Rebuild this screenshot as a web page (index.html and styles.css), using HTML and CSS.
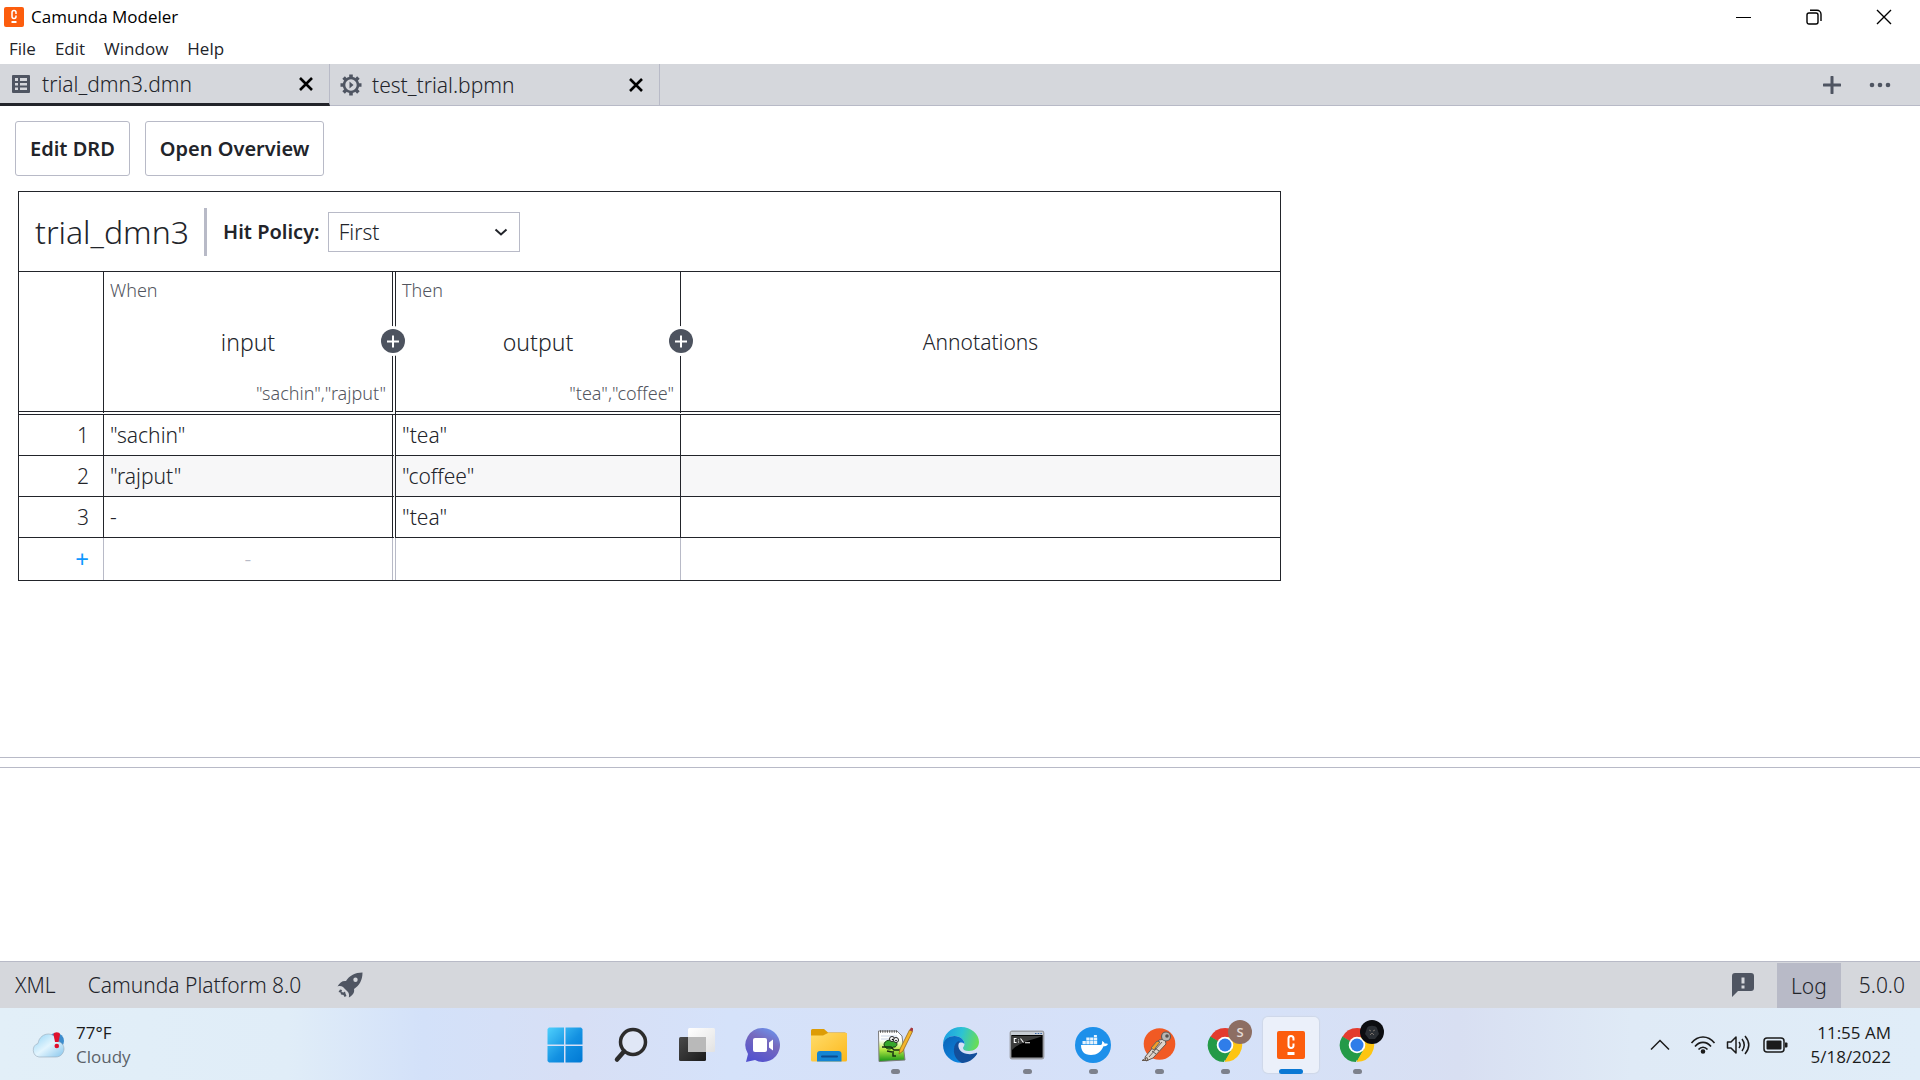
FILE: index.html
```html
<!DOCTYPE html>
<html lang="en">
  <head>
    <meta charset="UTF-8" />
    <meta name="viewport" content="width=device-width, initial-scale=1.0" />
    <title>Camunda Modeler</title>
    <link rel="stylesheet" href="styles.css">
  </head>
  <body>
    <header class="title-bar">
      <svg class="app-icon" viewBox="0 0 20 20" aria-hidden="true">
        <rect width="20" height="20" rx="2" fill="#fc5d0d" />
        <path d="M12 7V5.500a2 2 0 0 0-4 0v4a2 2 0 0 0 4 0V8.500" fill="none" stroke="#fff" stroke-width="1.500" />
        <path d="M7.500 14h5v2h-5z" fill="#fff" />
      </svg>
      <span class="app-title">Camunda Modeler</span>
      <div class="window-controls">
        <button aria-label="Minimize">
          <svg width="16" height="16" viewBox="0 0 16 16"><path d="M0 8.500h15" stroke="#000" /></svg>
        </button>
        <button aria-label="Restore">
          <svg width="16" height="16" viewBox="0 0 16 16" fill="none" stroke="#000" stroke-width="1.400">
            <rect x="1" y="4" width="11" height="11" rx="2" />
            <path d="M4 1.200h7a4 4 0 0 1 4 4V12" />
          </svg>
        </button>
        <button aria-label="Close">
          <svg width="16" height="16" viewBox="0 0 16 16"><path d="M1 1l14 14M15 1L1 15" stroke="#000" stroke-width="1.400" /></svg>
        </button>
      </div>
    </header>

    <nav class="menu-bar">
      <a href="#">File</a>
      <a href="#">Edit</a>
      <a href="#">Window</a>
      <a href="#">Help</a>
    </nav>

    <div class="tabs">
      <div class="tab active">
        <svg width="18" height="18" viewBox="0 0 18 18" aria-hidden="true">
          <path fill="#4f5562" fill-rule="evenodd" d="M1 0h16a1 1 0 0 1 1 1v16a1 1 0 0 1-1 1H1a1 1 0 0 1-1-1V1a1 1 0 0 1 1-1zM3 3v3h3V3zm5 0v3h7V3zM3 8v2.500h3V8zm5 0v2.500h7V8zM3 12.500V15h3v-2.500zm5 0V15h7v-2.500z" />
        </svg>
        <a href="#">trial_dmn3.dmn</a>
        <button class="tab-close" aria-label="Close trial_dmn3.dmn">
          <svg width="14" height="14" viewBox="0 0 14 14"><path d="M1 1l12 12M13 1L1 13" stroke="#000" stroke-width="2.600" /></svg>
        </button>
      </div>
      <div class="tab">
        <svg width="22" height="22" viewBox="0 0 22 22" aria-hidden="true">
          <circle cx="11" cy="11" r="7" fill="none" stroke="#4f5562" stroke-width="2.600" />
          <g stroke="#4f5562" stroke-width="3.600">
            <path d="M11 .5v4M11 17.500v4M.5 11h4M17.500 11h4M3.600 3.600l2.800 2.800M15.600 15.600l2.800 2.800M18.400 3.600l-2.800 2.800M6.400 15.600l-2.800 2.800" />
          </g>
          <path d="M9.500 7.500l4 3.500-4 3.500z" fill="#4f5562" />
        </svg>
        <a href="#">test_trial.bpmn</a>
        <button class="tab-close" aria-label="Close test_trial.bpmn">
          <svg width="14" height="14" viewBox="0 0 14 14"><path d="M1 1l12 12M13 1L1 13" stroke="#000" stroke-width="2.600" /></svg>
        </button>
      </div>
      <div class="tab-actions">
        <button aria-label="New file">
          <svg width="18" height="18" viewBox="0 0 18 18"><path d="M9 1v16M1 9h16" stroke="#4f5562" stroke-width="3" stroke-linecap="round" /></svg>
        </button>
        <button aria-label="More tabs">
          <svg width="22" height="6" viewBox="0 0 22 6" fill="#4f5562"><circle cx="3" cy="3" r="2.300" /><circle cx="11" cy="3" r="2.300" /><circle cx="19" cy="3" r="2.300" /></svg>
        </button>
      </div>
    </div>

    <main class="editor">
      <div class="view-buttons">
        <button>Edit DRD</button>
        <button>Open Overview</button>
      </div>

      <section class="decision">
        <div class="decision-header">
          <h1>trial_dmn3</h1>
          <label for="hitPolicy">Hit Policy:</label>
          <div class="select-wrap">
            <select id="hitPolicy">
              <option>First</option>
              <option>Unique</option>
              <option>Any</option>
              <option>Collect</option>
            </select>
            <svg width="14" height="8" viewBox="0 0 14 8" aria-hidden="true"><path d="M1.500 1.500L7 6.500l5.500-5" fill="none" stroke="#22242a" stroke-width="2" /></svg>
          </div>
        </div>

        <table class="decision-table">
          <thead>
            <tr>
              <th class="index"></th>
              <th class="input">
                <div class="column-head">
                  <span class="clause">When</span>
                  <span class="name">input</span>
                  <span class="values">"sachin","rajput"</span>
                </div>
                <button class="add-column" aria-label="Add input">
                  <svg width="24" height="24" viewBox="0 0 24 24"><circle cx="12" cy="12" r="12" fill="#4d535f" /><path d="M12 6.500v12M6 12.500h12" stroke="#fff" stroke-width="2" /></svg>
                </button>
              </th>
              <th class="output">
                <div class="column-head">
                  <span class="clause">Then</span>
                  <span class="name">output</span>
                  <span class="values">"tea","coffee"</span>
                </div>
                <button class="add-column" aria-label="Add output">
                  <svg width="24" height="24" viewBox="0 0 24 24"><circle cx="12" cy="12" r="12" fill="#4d535f" /><path d="M12 6.500v12M6 12.500h12" stroke="#fff" stroke-width="2" /></svg>
                </button>
              </th>
              <th class="annotations">Annotations</th>
            </tr>
          </thead>
          <tbody>
            <tr>
              <td class="index">1</td>
              <td class="input">"sachin"</td>
              <td class="output">"tea"</td>
              <td></td>
            </tr>
            <tr>
              <td class="index">2</td>
              <td class="input">"rajput"</td>
              <td class="output">"coffee"</td>
              <td></td>
            </tr>
            <tr>
              <td class="index">3</td>
              <td class="input">-</td>
              <td class="output">"tea"</td>
              <td></td>
            </tr>
          </tbody>
          <tfoot>
            <tr>
              <td class="index"><button class="add-rule" aria-label="Add rule">+</button></td>
              <td class="input">-</td>
              <td class="output"></td>
              <td></td>
            </tr>
          </tfoot>
        </table>
      </section>
    </main>

    <section class="log-panel" aria-label="Log"></section>

    <footer class="status-bar">
      <button>XML</button>
      <span class="platform">Camunda Platform 8.0</span>
      <button class="deploy" aria-label="Deploy">
        <svg width="26" height="26" viewBox="0 0 26 26">
          <path fill="#4f5562" fill-rule="evenodd" d="M25.500.500C18 .500 12.500 3.500 9 9 5.500 8.500 2.500 10.500.500 14.500c2-.7 4-.5 5.500.5l5 5c1.200 1.800 1.300 3.500.8 5.500 4-2 6-5 5.200-8.500C22.500 13.500 25.500 8 25.500.500zM18.500 5.500a2.200 2.200 0 1 1 0 4.400 2.200 2.200 0 0 1 0-4.400z" />
          <path fill="#4f5562" d="M3 17.500l2 .5-.500 2 2 .500 1.500-1 .500 2 1 2.500-2 1-1-2-2.500-.500-.500-2-2-.500z" />
        </svg>
      </button>
      <button class="feedback" aria-label="Feedback">
        <svg width="22" height="24" viewBox="0 0 22 24">
          <path fill="#4f5562" d="M3 0h16a3 3 0 0 1 3 3v12a3 3 0 0 1-3 3H6l-6 6V3a3 3 0 0 1 3-3z" />
          <path fill="#d5d7dc" d="M9.500 4.500h3v6h-3zM9.500 12.500h3v3h-3z" />
        </svg>
      </button>
      <button class="log-toggle">Log</button>
      <span class="version">5.0.0</span>
    </footer>

    <div class="taskbar">
      <div class="weather">
        <svg width="34" height="28" viewBox="0 0 34 28" aria-hidden="true">
          <defs>
            <linearGradient id="cloud" x1="0" y1="0" x2="1" y2="1"><stop offset="0" stop-color="#8fd2f5" /><stop offset=".5" stop-color="#e3f5fe" /><stop offset="1" stop-color="#86c5ec" /></linearGradient>
          </defs>
          <circle cx="25" cy="10" r="8" fill="#3c8ccd" />
          <path d="M8 26a7 7 0 0 1-1-13.500C8 6 13 3 17.500 3S26 7 26.500 10.500C31 11 33 14.500 33 18s-3 8-8 8z" fill="url(#cloud)" stroke="#98a9b8" stroke-width=".6" />
          <path d="M22.500 3.500C22.500.500 29 .500 29 3.500L27.500 11h-3.500z" fill="#e0102c" />
          <circle cx="25.800" cy="15" r="2.300" fill="#e0102c" />
        </svg>
        <p>77°F<br><span>Cloudy</span></p>
      </div>

      <div class="apps">
        <button aria-label="Start">
          <svg width="36" height="36" viewBox="0 0 36 36">
            <defs><linearGradient id="start" x1="0" y1="0" x2="1" y2="1"><stop offset="0" stop-color="#4fd0fc" /><stop offset=".55" stop-color="#1391e2" /><stop offset="1" stop-color="#0078d4" /></linearGradient></defs>
            <path fill="url(#start)" d="M2 .5h15v17H.5V2zM18.500.5h15.500l1.500 1.500v15.500h-17zM.5 19H17v16.500H2L.5 34zM18.500 19h17v15l-1.500 1.500H18.500z" />
          </svg>
        </button>
        <button aria-label="Search">
          <svg width="36" height="36" viewBox="0 0 36 36" fill="none" stroke="#2c2c2c">
            <circle cx="20" cy="15" r="12.500" fill="#e0e7f6" stroke-width="3.500" /><path d="M11 24.500L4 32.500" stroke-width="4.500" stroke-linecap="round" />
          </svg>
        </button>
        <button aria-label="Task view">
          <svg width="36" height="36" viewBox="0 0 36 36">
            <defs>
              <linearGradient id="dark" x2="1" y2="1"><stop offset="0" stop-color="#4a4a4a" /><stop offset="1" stop-color="#1b1b1b" /></linearGradient>
              <linearGradient id="light" x2="1" y2="1"><stop offset="0" stop-color="#fff" /><stop offset="1" stop-color="#e2e2e2" /></linearGradient>
            </defs>
            <rect x="9" y="1" width="27" height="24" rx="1.500" fill="url(#light)" />
            <rect x="0" y="10" width="27" height="24" rx="1.500" fill="url(#dark)" />
            <path d="M9 10h18v15H9z" fill="#b9b9b9" />
          </svg>
        </button>
        <button aria-label="Chat">
          <svg width="36" height="36" viewBox="0 0 36 36">
            <defs><linearGradient id="chat" x1=".8" y1="0" x2=".3" y2="1"><stop offset="0" stop-color="#6c94ee" /><stop offset=".4" stop-color="#7669bd" /><stop offset="1" stop-color="#5352cf" /></linearGradient></defs>
            <path d="M18 1a17 17 0 1 1-8 32L1 35l2-8A17 17 0 0 1 18 1z" fill="url(#chat)" />
            <rect x="8" y="11" width="14" height="14" rx="2" fill="#fff" /><path d="M24 15.500l4-3v11l-4-3z" fill="#fff" />
          </svg>
        </button>
        <button aria-label="File Explorer">
          <svg width="36" height="36" viewBox="0 0 36 36">
            <defs><linearGradient id="folder" x2="1" y2="1"><stop offset="0" stop-color="#ffdc6a" /><stop offset="1" stop-color="#fcb81c" /></linearGradient></defs>
            <path d="M1.500 2H13l4 3.500h17a1.500 1.500 0 0 1 1.500 1.500v9H0V3.500A1.500 1.500 0 0 1 1.500 2z" fill="#dd9c06" />
            <path d="M0 8.500h12L17 6h19v27a1.500 1.500 0 0 1-1.500 1.500h-33A1.500 1.500 0 0 1 0 33z" fill="url(#folder)" />
            <path d="M6 34.500V27a3 3 0 0 1 3-3h18.500a3 3 0 0 1 3 3v7.500z" fill="#1485d3" />
            <path d="M11 29.500h15" stroke="#0b4d92" stroke-width="2" stroke-linecap="round" />
          </svg>
        </button>
        <button class="running" aria-label="Notepad++">
          <svg width="36" height="36" viewBox="0 0 36 36">
            <defs><linearGradient id="npp" x2="0" y2="1"><stop offset=".3" stop-color="#fff" /><stop offset=".6" stop-color="#b9ea44" /><stop offset="1" stop-color="#159516" /></linearGradient></defs>
            <path d="M1.500 4H20l5 5 3 24-26 1.500z" fill="url(#npp)" stroke="#7d7d7d" />
            <path d="M3 4.500h17" stroke="#555" stroke-width="2.500" stroke-dasharray="1 1.300" />
            <path d="M4 9h16M4 12h8" stroke="#c9d6e8" />
            <path d="M7 18c0-5 7-6 11-4 4 3 1 7-2 6-2 3-7 3-9-2z" fill="#35a62b" stroke="#153c10" />
            <path d="M5 20h9l3 3h6M10 24l5 1" fill="none" stroke="#182e12" stroke-width="1.400" />
            <circle cx="15" cy="12" r="2.500" fill="#fff" stroke="#222" /><circle cx="19" cy="13" r="2.500" fill="#fff" stroke="#222" /><circle cx="15.500" cy="12.500" r=".8" /><circle cx="19" cy="13.500" r=".8" />
            <path d="M16 24v5h3" fill="none" stroke="#173212" stroke-width="1.500" />
            <path d="M22 27l1-5L32.500 3l3 1.500L26 24z" fill="#f4b52b" stroke="#96691c" stroke-width=".8" />
            <path d="M32.500 3L34 .500l2.500 1-1 3z" fill="#a5383d" />
          </svg>
        </button>
        <button aria-label="Microsoft Edge">
          <svg width="36" height="36" viewBox="0 0 36 36">
            <defs>
              <linearGradient id="edgeTop" x1="0" y1=".3" x2="1" y2=".5"><stop offset="0" stop-color="#1c9de4" /><stop offset=".5" stop-color="#2dc3d3" /><stop offset="1" stop-color="#68dd55" /></linearGradient>
              <linearGradient id="edgeSide" x2=".6" y2="1"><stop offset="0" stop-color="#0b63b7" /><stop offset="1" stop-color="#0b83dd" /></linearGradient>
            </defs>
            <path d="M0 18C0 7 8 0 18 0s18 7 18 15c0 6-5 9-10 9-4 0-6-1-6-3 0-1 1.500-2 1.500-4 0-4-4-8-10-8C6 9 2 12 0 18z" fill="url(#edgeTop)" />
            <path d="M0 18C1 12 6 9 11.500 9c6 0 10 4 10 8-2-3-9-2-10 5-1 6 4 11 10 13.500C10 37.500 0 29 0 18z" fill="url(#edgeSide)" />
            <path d="M14 15c-5 5-4 14 4 17 7 3 12-1 16-5 .5-.6 0-1.500-1-1-6 2.500-16 1-17.500-6-.4-2 .2-4 1.500-6-1 0-2 .3-3 1z" fill="#134f9b" />
            <path d="M11 22c-1 7 4 12 8 14 6 0 12-4 15-9-7 5-16 4-19-3z" fill="#134f9b" />
          </svg>
        </button>
        <button class="running" aria-label="Command Prompt">
          <svg width="36" height="36" viewBox="0 0 36 36">
            <rect x="1.500" y="4.500" width="33" height="27" rx="1.500" fill="#000" stroke="#9b9da3" stroke-width="1.800" />
            <path d="M2 5h32v3H2z" fill="#c7ccd4" />
            <path d="M26 6.500h7" stroke="#3864a7" stroke-width="1.200" stroke-dasharray="1.500 1.200" />
            <path d="M3 9h30C25 13 12 14 3 23z" fill="#555" opacity=".7" />
            <path d="M7.500 11.500H5.300v4h2.200M9.500 12.500v.8M9.500 14.600v.8M11.500 11.500l3 4M16 15.700h5" fill="none" stroke="#fff" stroke-width="1.100" />
          </svg>
        </button>
        <button class="running" aria-label="Docker">
          <svg width="36" height="36" viewBox="0 0 36 36">
            <circle cx="18" cy="18" r="18" fill="#1d90ea" />
            <path d="M6 18h19.500c1 0 2-1 1.500-4 2 1 2.300 1.500 2.500 2.500 1.500-.3 3 0 3.500.5-1 2-3 2.300-4.500 2.300C26 25 22 28 16 28c-7 0-10-4-10-10z" fill="#fff" />
            <path d="M7.500 14h3.300v3.300H7.500zM11.300 14h3.300v3.300h-3.300zM15.100 14h3.300v3.300h-3.300zM18.900 14h3.300v3.300h-3.300zM11.300 10.500h3.300v3h-3.300zM15.100 10.500h3.300v3h-3.300zM18.900 10.500h3.300v3h-3.300zM18.900 8h3v2h-3z" fill="#e6f3fd" />
          </svg>
        </button>
        <button class="running" aria-label="Postman">
          <svg width="36" height="36" viewBox="0 0 36 36">
            <circle cx="18.500" cy="17" r="15.800" fill="#f15a24" />
            <path d="M1 33.500l5-3 1 3zM4 30l14-17 6-1 1 5-13 14-7 3z" fill="#ddd5cc" stroke="#66594f" stroke-width="1" />
            <path d="M8 30l13-15M10 21l6-7 3 1-6 8z" fill="#f3a129" stroke="#6d625b" stroke-width="1" />
            <circle cx="25" cy="9.500" r="4.500" fill="#b9b6b2" stroke="#5e5a56" stroke-width="1.200" /><circle cx="26" cy="9" r="1.800" fill="#55504d" />
            <path d="M11 24l4 3M14 21l4 3" stroke="#5e5a56" />
          </svg>
        </button>
        <button class="running" aria-label="Google Chrome, profile S">
          <svg width="36" height="36" viewBox="0 0 36 36">
            <path d="M18 18L3.300 10A16.700 16.700 0 0 1 33 10z" fill="#e33b2e" />
            <path d="M18 18l-1 17A16.700 16.700 0 0 1 3.300 9.500z" fill="#249a48" />
            <path d="M11 22l7 12.500 7.500-13z" fill="#249a48" /><path d="M25.500 21L17.500 34.700A16.700 16.700 0 0 0 33 10H18z" fill="#fdc512" />
            <circle cx="18" cy="18" r="8.300" fill="#fff" /><circle cx="18" cy="18" r="6.500" fill="#2f7de9" />
          </svg>
          <span class="profile">S</span>
        </button>
        <button class="running focused" aria-label="Camunda Modeler">
          <svg width="36" height="36" viewBox="0 0 36 36">
            <rect x="4" y="4" width="28" height="28" rx="2" fill="#fc5d0d" />
            <path d="M20.500 13.500v-2a2.500 2.500 0 0 0-5 0v7a2.500 2.500 0 0 0 5 0v-2" fill="none" stroke="#fff" stroke-width="2" />
            <path d="M14.500 25h7v3h-7z" fill="#fff" />
          </svg>
        </button>
        <button class="running" aria-label="Google Chrome, second profile">
          <svg width="36" height="36" viewBox="0 0 36 36">
            <path d="M18 18L3.300 10A16.700 16.700 0 0 1 33 10z" fill="#e33b2e" />
            <path d="M18 18l-1 17A16.700 16.700 0 0 1 3.300 9.500z" fill="#249a48" />
            <path d="M11 22l7 12.500 7.500-13z" fill="#249a48" /><path d="M25.500 21L17.500 34.700A16.700 16.700 0 0 0 33 10H18z" fill="#fdc512" />
            <circle cx="18" cy="18" r="8.300" fill="#fff" /><circle cx="18" cy="18" r="6.500" fill="#2f7de9" />
          </svg>
          <span class="profile photo">
            <svg width="24" height="24" viewBox="0 0 24 24"><path d="M7 8c1-3 9-3 10 0l2 6-4 5H9l-4-5z" fill="#2b2f35" /><path d="M9 10l2 1M15 10l-2 1M10 15l2-2 2 2" stroke="#77706b" fill="none" /></svg>
          </span>
        </button>
      </div>

      <div class="tray">
        <button class="chevron" aria-label="Show hidden icons">
          <svg width="20" height="12" viewBox="0 0 20 12"><path d="M1 10.500l9-9 9 9" fill="none" stroke="#1b1b1b" stroke-width="1.500" /></svg>
        </button>
        <svg width="26" height="20" viewBox="0 0 26 20" fill="none" stroke="#1b1b1b" stroke-width="1.600" aria-hidden="true">
          <path d="M1.500 8C8 0 18 0 24.500 8M5 11.500c4.500-5.500 11.500-5.500 16 0M8.500 14.500c2.500-3 6.500-3 9 0" /><circle cx="13" cy="16.500" r="1.500" fill="#1b1b1b" />
        </svg>
        <svg width="26" height="20" viewBox="0 0 26 20" fill="none" stroke="#1b1b1b" stroke-width="1.500" aria-hidden="true">
          <path d="M1.500 7h3.500l5-5v16l-5-5H1.500z" stroke-linejoin="round" /><path d="M13 7c1.500 2 1.500 4 0 6M16 4c3 4 3 8 0 12M19 1c5 6 5 12 0 18" />
        </svg>
        <svg width="26" height="20" viewBox="0 0 26 20" aria-hidden="true">
          <rect x="2" y="3" width="20" height="14" rx="3" fill="none" stroke="#1b1b1b" stroke-width="1.500" /><rect x="4.500" y="5.500" width="15" height="9" rx="1" fill="#1b1b1b" /><path d="M23 7.500h1.500a1 1 0 0 1 1 1v3a1 1 0 0 1-1 1H23z" fill="#1b1b1b" />
        </svg>
        <p class="clock">11:55 AM<br>5/18/2022</p>
      </div>
    </div>
  </body>
</html>
```

FILE: styles.css
```css
* {
  margin: 0;
  padding: 0;
  box-sizing: border-box;
}

body {
  display: flex;
  flex-direction: column;
  min-height: 100vh;
  font-family: "Noto Sans", sans-serif;
  font-size: 21px;
  font-weight: 300;
  line-height: 28px;
  color: #22242a;
  background: #fff;
}

button {
  font: inherit;
  color: inherit;
  background: none;
  border: none;
  cursor: pointer;
}

a {
  color: inherit;
  text-decoration: none;
}

svg {
  display: block;
  flex: none;
}

/* Window chrome */
.title-bar {
  display: flex;
  align-items: center;
  height: 34px;
  padding-left: 4px;
  font-family: "Open Sans", sans-serif;
  font-size: 17px;
  font-weight: 400;
  color: #000;
}

.app-icon {
  width: 20px;
  height: 20px;
  margin-right: 7px;
}

.window-controls {
  display: flex;
  margin-left: auto;
  padding-right: 1px;
}

.window-controls button {
  display: flex;
  align-items: center;
  justify-content: center;
  width: 70px;
  height: 34px;
}

.menu-bar {
  display: flex;
  align-items: center;
  gap: 19px;
  height: 30px;
  padding-left: 9px;
  font-family: "Open Sans", sans-serif;
  font-size: 17px;
  font-weight: 400;
}

/* Tabs */
.tabs {
  display: flex;
  height: 42px;
  background: #d5d7dc;
  border-bottom: 1px solid #b8bac7;
}

.tab {
  display: flex;
  align-items: center;
  gap: 10px;
  width: 330px;
  height: 42px;
  padding: 0 16px 0 10px;
  border-right: 1px solid #b8bac7;
}

.tab.active {
  gap: 12px;
  padding-left: 12px;
  border-bottom: 3px solid #22242a;
}

.tab-close {
  margin-left: auto;
}

.tab-actions {
  display: flex;
  align-items: center;
  gap: 28px;
  margin-left: auto;
  padding-right: 29px;
}

/* Editor */
.editor {
  flex: 1;
  padding: 15px;
}

.view-buttons {
  display: flex;
  gap: 15px;
  margin-bottom: 15px;
}

.view-buttons button {
  height: 55px;
  padding: 0 14px;
  font-size: 20px;
  font-weight: 600;
  border: 1px solid #b8bac7;
  border-radius: 3px;
}

.decision {
  width: fit-content;
  margin-left: 3px;
  border: 1px solid #22242a;
}

.decision-header {
  display: flex;
  align-items: center;
  height: 80px;
  padding-left: 16px;
  border-bottom: 1px solid #22242a;
}

.decision-header h1 {
  padding-right: 15px;
  font-size: 32px;
  font-weight: 300;
  line-height: 48px;
  border-right: 3px solid #b8bac7;
}

.decision-header label {
  margin: 0 8px 0 16px;
  font-size: 20px;
  font-weight: 600;
}

.select-wrap {
  position: relative;
}

.select-wrap select {
  appearance: none;
  width: 192px;
  height: 40px;
  padding: 0 10px;
  font: inherit;
  color: inherit;
  background: #fff;
  border: 1px solid #b8bac7;
  border-radius: 0;
}

.select-wrap svg {
  position: absolute;
  top: 16px;
  right: 12px;
  pointer-events: none;
}

/* Decision table */
.decision-table {
  border-collapse: separate;
  border-spacing: 0;
}

.decision-table th {
  position: relative;
  height: 143px;
  font-weight: 300;
  border-right: 1px solid #22242a;
  border-bottom: 4px double #22242a;
}

.decision-table td {
  height: 41px;
  padding: 0 6px;
  border-right: 1px solid #22242a;
  border-bottom: 1px solid #22242a;
}

.decision-table .index {
  width: 85px;
  padding-right: 14px;
  text-align: right;
}

.decision-table .input {
  width: 292px;
  border-right: 4px double #22242a;
}

.decision-table .output {
  width: 285px;
}

.decision-table .annotations {
  width: 599px;
}

.decision-table th:last-child,
.decision-table td:last-child {
  border-right: none;
}

.decision-table tbody tr:nth-child(even) td:not(.index) {
  background: #f7f7f8;
}

.decision-table tfoot td {
  height: 42px;
  border-bottom: none;
  border-right-color: #b8bac7;
}

.decision-table tfoot .index {
  border-right-color: #b8bac7;
}

.decision-table tfoot .input {
  color: #b8bac7;
  text-align: center;
  border-right-color: #b8bac7;
}

.column-head {
  display: flex;
  flex-direction: column;
  justify-content: space-between;
  height: 139px;
  padding: 4px 6px;
}

.clause,
.values {
  font-size: 18px;
  color: #52555e;
}

.clause {
  text-align: left;
}

.name {
  font-size: 23px;
}

.values {
  text-align: right;
}

/* Sits on the column's right border */
.add-column {
  position: absolute;
  top: 54px;
  right: -13px;
  z-index: 1;
  padding: 3px 0;
  background: #fff;
  border-radius: 12px;
}

.add-rule {
  font-size: 24px;
  font-weight: 400;
  color: #0f98ff;
}

/* Log panel and status bar */
.log-panel {
  height: 204px;
  border-top: 1px solid #b8bac7;
}

.log-panel::before {
  content: "";
  display: block;
  height: 9px;
  border-bottom: 1px solid #b8bac7;
}

.status-bar {
  display: flex;
  align-items: center;
  height: 47px;
  padding-left: 15px;
  background: #d5d7dc;
  border-top: 1px solid #b8bac7;
}

.platform {
  margin-left: 32px;
}

.deploy {
  margin-left: 36px;
}

.feedback {
  margin-left: auto;
}

.log-toggle {
  align-self: stretch;
  margin: 1px 18px 0 23px;
  padding: 0 14px;
  background: #b8bac7;
}

.version {
  padding-right: 15px;
}

/* Taskbar */
.taskbar {
  display: grid;
  grid-template-columns: 1fr auto 1fr;
  align-items: center;
  height: 72px;
  padding: 2px 29px 0 31px;
  font-family: "Open Sans", sans-serif;
  font-size: 17px;
  font-weight: 400;
  line-height: 24px;
  color: #1b1b1b;
  background: linear-gradient(90deg, #e2eff8 0%, #e0edf8 15%, #d3e1f9 22%, #d7dff5 30%, #d5e2fa 38%, #d6e0f7 50%, #d5e2fa 62%, #d8dff2 76%, #dfeaf6 85%, #e0edf8 100%);
}

.weather {
  display: flex;
  align-items: center;
  gap: 11px;
}

.weather span {
  color: #5b6269;
}

.apps {
  display: flex;
  gap: 10px;
}

.apps button {
  position: relative;
  display: flex;
  align-items: center;
  justify-content: center;
  width: 56px;
  height: 56px;
  border-radius: 5px;
}

.apps .focused {
  background: #ebf0fa;
  box-shadow: 0 0 1px 1px #cfd8e8;
}

.running::after {
  content: "";
  position: absolute;
  bottom: -1px;
  width: 9px;
  height: 5px;
  background: #7d818c;
  border-radius: 3px;
}

.focused::after {
  width: 24px;
  background: #0a78d4;
}

.profile {
  position: absolute;
  top: 3px;
  right: 1px;
  width: 24px;
  height: 24px;
  font-size: 13px;
  font-weight: 600;
  color: #e4dad6;
  background: #8d6e63;
  border-radius: 50%;
}

.profile.photo {
  background: #0c0d11;
}

.tray {
  display: flex;
  align-items: center;
  justify-content: flex-end;
  gap: 10px;
}

.chevron {
  margin-right: 10px;
}

.clock {
  margin-left: 12px;
  text-align: right;
}
```
